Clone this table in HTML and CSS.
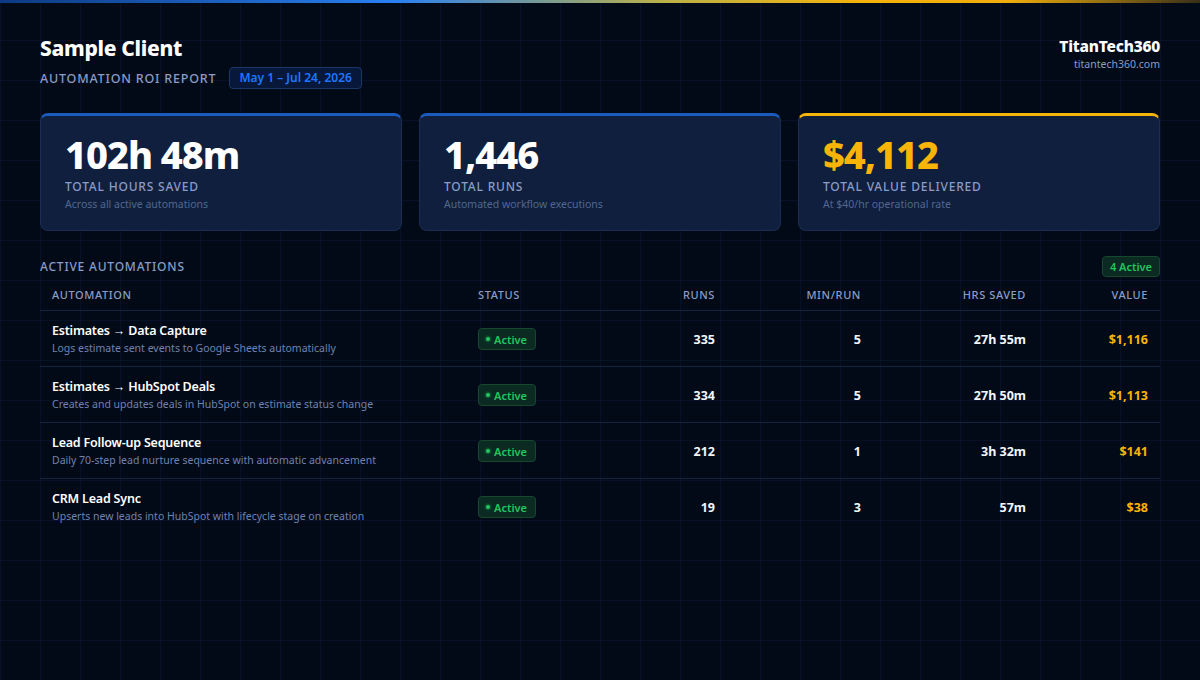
FILE: index.html
```html
<!DOCTYPE html>
<html lang="en">
<head>
<meta charset="utf-8">
<title>Automation ROI Report</title>
<link rel="stylesheet" href="styles.css">
</head>
<body>
<div class="topbar"></div>
<main class="page">
  <header class="header">
    <div class="client">
      <h1 class="client-name">Sample Client</h1>
      <div class="subline">
        <span class="report-title">Automation ROI Report</span>
        <span class="date-badge">May 1 – Jul 24, 2026</span>
      </div>
    </div>
    <div class="brand">
      <div class="brand-name">TitanTech360</div>
      <div class="brand-url">titantech360.com</div>
    </div>
  </header>

  <section class="stats">
    <div class="stat stat-blue">
      <div class="stat-value">102h 48m</div>
      <div class="stat-label">Total Hours Saved</div>
      <div class="stat-sub">Across all active automations</div>
    </div>
    <div class="stat stat-blue">
      <div class="stat-value">1,446</div>
      <div class="stat-label">Total Runs</div>
      <div class="stat-sub">Automated workflow executions</div>
    </div>
    <div class="stat stat-gold">
      <div class="stat-value gold">$4,112</div>
      <div class="stat-label">Total Value Delivered</div>
      <div class="stat-sub">At $40/hr operational rate</div>
    </div>
  </section>

  <section class="automations">
    <div class="section-head">
      <h2 class="section-title">Active Automations</h2>
      <span class="count-badge">4 Active</span>
    </div>
    <table class="table">
      <colgroup>
        <col class="c-name"><col class="c-status"><col class="c-runs"><col class="c-min"><col class="c-hrs"><col class="c-val">
      </colgroup>
      <thead>
        <tr>
          <th>Automation</th>
          <th>Status</th>
          <th class="num">Runs</th>
          <th class="num">Min/Run</th>
          <th class="num">Hrs Saved</th>
          <th class="num">Value</th>
        </tr>
      </thead>
      <tbody>
        <tr>
          <td><div class="a-name">Estimates → Data Capture</div><div class="a-desc">Logs estimate sent events to Google Sheets automatically</div></td>
          <td><span class="pill"><span class="dot"></span>Active</span></td>
          <td class="num">335</td>
          <td class="num">5</td>
          <td class="num">27h 55m</td>
          <td class="num gold">$1,116</td>
        </tr>
        <tr>
          <td><div class="a-name">Estimates → HubSpot Deals</div><div class="a-desc">Creates and updates deals in HubSpot on estimate status change</div></td>
          <td><span class="pill"><span class="dot"></span>Active</span></td>
          <td class="num">334</td>
          <td class="num">5</td>
          <td class="num">27h 50m</td>
          <td class="num gold">$1,113</td>
        </tr>
        <tr>
          <td><div class="a-name">Lead Follow-up Sequence</div><div class="a-desc">Daily 70-step lead nurture sequence with automatic advancement</div></td>
          <td><span class="pill"><span class="dot"></span>Active</span></td>
          <td class="num">212</td>
          <td class="num">1</td>
          <td class="num">3h 32m</td>
          <td class="num gold">$141</td>
        </tr>
        <tr>
          <td><div class="a-name">CRM Lead Sync</div><div class="a-desc">Upserts new leads into HubSpot with lifecycle stage on creation</div></td>
          <td><span class="pill"><span class="dot"></span>Active</span></td>
          <td class="num">19</td>
          <td class="num">3</td>
          <td class="num">57m</td>
          <td class="num gold">$38</td>
        </tr>
      </tbody>
    </table>
  </section>
</main>
</body>
</html>
```

FILE: styles.css
```css
* { box-sizing: border-box; }

html, body {
  margin: 0;
  padding: 0;
}

body {
  width: 1200px;
  height: 680px;
  overflow: hidden;
  font-family: "Noto Sans", "Open Sans", "Liberation Sans", sans-serif;
  color: #f2f6fc;
  background-color: #020a18;
  background-image:
    linear-gradient(to right, rgba(22, 48, 92, 0.2) 1px, transparent 1px),
    linear-gradient(to bottom, rgba(22, 48, 92, 0.2) 1px, transparent 1px);
  background-size: 40px 40px;
}

.topbar {
  height: 3px;
  background: linear-gradient(90deg, #0c3a82 0%, #2a80f2 33%, #b9b04a 55%, #f5b20a 72%, #f0ad0c 84%, rgba(90, 70, 20, 0.6) 100%);
}

.page {
  padding: 30px 40px 0;
}

/* Header */
.header {
  display: flex;
  justify-content: space-between;
  align-items: flex-start;
}

.client-name {
  margin: 0;
  font-size: 21px;
  line-height: 30px;
  font-weight: 800;
  letter-spacing: -0.3px;
  color: #ffffff;
}

.subline {
  display: flex;
  align-items: center;
  gap: 13px;
  margin-top: 4px;
}

.report-title {
  font-size: 12.5px;
  letter-spacing: 0.8px;
  text-transform: uppercase;
  color: #8b9cc6;
  font-weight: 500;
}

.date-badge {
  display: inline-block;
  height: 22px;
  line-height: 20px;
  padding: 0 9px;
  font-size: 12px;
  font-weight: 600;
  color: #1d76ff;
  background: #08183a;
  border: 1px solid #173766;
  border-radius: 4px;
}

.brand {
  text-align: right;
  padding-top: 2px;
}

.brand-name {
  font-size: 15.5px;
  line-height: 22px;
  font-weight: 800;
  letter-spacing: -0.2px;
  color: #ffffff;
}

.brand-url {
  font-size: 10.5px;
  line-height: 14px;
  color: #8b9cc6;
}

/* Stats */
.stats {
  display: grid;
  grid-template-columns: repeat(3, 1fr);
  gap: 17px;
  margin-top: 24px;
}

.stat {
  height: 118px;
  padding: 18px 24px 0;
  background: #0f1f3d;
  border: 1px solid #1b2e52;
  border-radius: 8px;
}

.stat-blue { border-top: 3px solid #1b5bbd; }
.stat-gold { border-top: 3px solid #f5b50a; }

.stat-value {
  font-size: 38px;
  line-height: 40px;
  font-weight: 800;
  color: #ffffff;
  letter-spacing: -1px;
}

.stat-label {
  margin-top: 5px;
  font-size: 12px;
  line-height: 16px;
  letter-spacing: 0.8px;
  text-transform: uppercase;
  color: #8b9cc6;
  font-weight: 500;
}

.stat-sub {
  margin-top: 1px;
  font-size: 10.5px;
  line-height: 16px;
  color: #53678f;
}

.gold { color: #f9b408 !important; }

/* Automations */
.automations {
  margin-top: 25px;
}

.section-head {
  display: flex;
  justify-content: space-between;
  align-items: center;
  height: 21px;
  margin-bottom: 3px;
}

.section-title {
  margin: 0;
  font-size: 12px;
  font-weight: 500;
  letter-spacing: 0.8px;
  text-transform: uppercase;
  color: #8b9cc6;
}

.count-badge {
  display: inline-block;
  height: 21px;
  line-height: 19px;
  padding: 0 7px;
  font-size: 11px;
  font-weight: 600;
  color: #22c55e;
  background: #0a2a22;
  border: 1px solid #16472f;
  border-radius: 4px;
}

.table {
  width: 100%;
  border-collapse: collapse;
  table-layout: fixed;
}

.c-name { width: 426px; }
.c-status { width: 130px; }
.c-runs { width: 131px; }
.c-min { width: 146px; }
.c-hrs { width: 165px; }
.c-val { width: 122px; }

.table th {
  padding: 8px 12px;
  font-size: 11px;
  line-height: 14px;
  font-weight: 500;
  letter-spacing: 0.6px;
  text-transform: uppercase;
  color: #8b9cc6;
  text-align: left;
  border-bottom: 1px solid #142340;
}

.table td {
  padding: 11px 12px 10px;
  vertical-align: middle;
  font-size: 12.5px;
  font-weight: 700;
  color: #f2f6fc;
  border-bottom: 1px solid #142340;
}

.table tbody tr:last-child td { border-bottom: none; }

.table .num { text-align: right; }

.a-name {
  font-size: 12.5px;
  line-height: 18px;
  font-weight: 600;
  letter-spacing: -0.2px;
  color: #ffffff;
}

.a-desc {
  font-size: 10.5px;
  line-height: 16px;
  font-weight: 400;
  color: #6f83b1;
}

.pill {
  display: inline-flex;
  align-items: center;
  gap: 4px;
  height: 22px;
  padding: 0 8px 0 7px;
  font-size: 11px;
  font-weight: 600;
  color: #22c55e;
  background: #0a2a22;
  border: 1px solid #16472f;
  border-radius: 4px;
}

.dot {
  width: 4px;
  height: 4px;
  border-radius: 50%;
  background: #22c55e;
  box-shadow: 0 0 3px #22c55e;
}
```
